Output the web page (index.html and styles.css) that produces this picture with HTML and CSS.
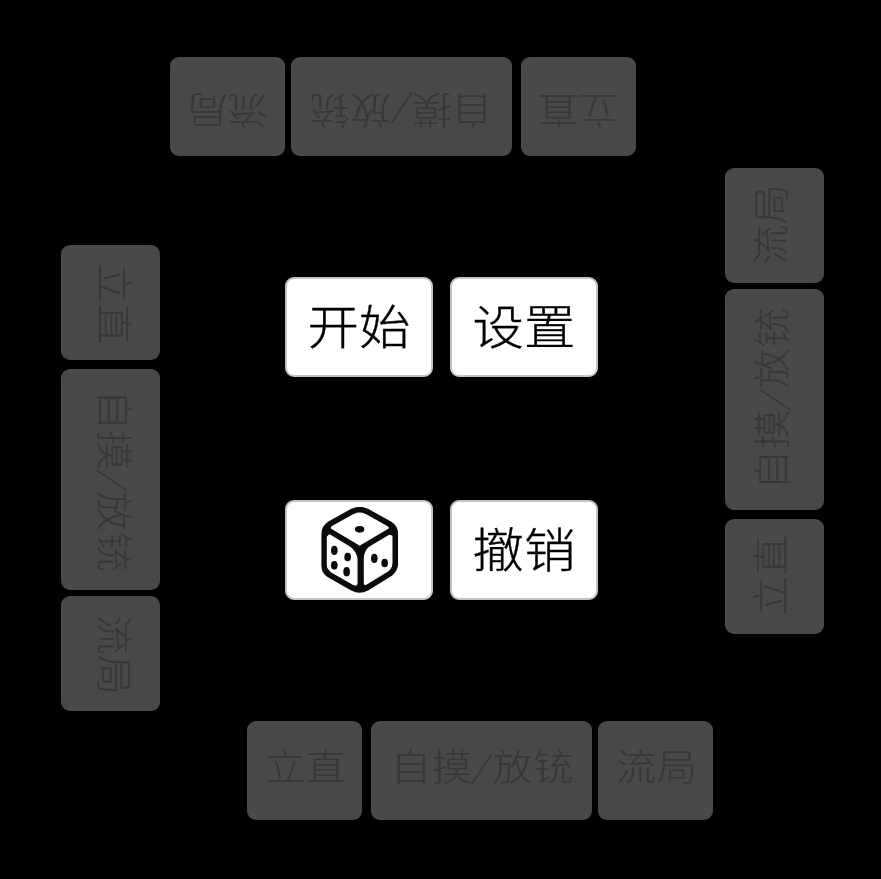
FILE: index.html
```html
<!DOCTYPE html>
<html lang="zh-CN">
<head>
<meta charset="utf-8">
<title>麻将计分</title>
<link rel="stylesheet" href="styles.css">
</head>
<body>
<main class="table">
  <section class="seat seat-top">
    <button class="action" disabled><span class="label">流局</span></button>
    <button class="action wide" disabled><span class="label">自摸<i class="slash">/</i>放铳</span></button>
    <button class="action spaced" disabled><span class="label">立直</span></button>
  </section>
  <section class="seat seat-left">
    <button class="action" disabled><span class="label">立直</span></button>
    <button class="action wide spaced" disabled><span class="label">自摸<i class="slash">/</i>放铳</span></button>
    <button class="action" disabled><span class="label">流局</span></button>
  </section>
  <section class="center">
    <button class="control"><span class="label">开始</span></button>
    <button class="control"><span class="label">设置</span></button>
    <button class="control">
      <svg class="dice" viewBox="124 36 230 258" aria-hidden="true">
        <path class="edge" d="M218 49Q239 39 260 49L330 88Q346 97 346 120V205Q346 224 330 236L260 279Q239 290 218 279L148 239Q132 230 132 209V120Q132 98 148 88Z"/>
        <path class="edge" d="M142 104L239 162L337 104M242 160V284"/>
        <path class="joint" d="M205 149L239 155L274 149Q251 165 251 193V266Q253 272 264 269L243 288L217 271Q231 275 233 267V193Q231 169 205 149ZM133 125L139 92L157 88Q149 99 155 112L139 126ZM321 88L341 92L346 126L337 122Q330 120 322 113Q331 102 321 88ZM133 209L144 222L156 236L136 229ZM337 209L346 208L341 230L321 236Q337 221 337 209Z"/>
        <ellipse cx="239" cy="103" rx="14" ry="10"/>
        <ellipse cx="163" cy="166" rx="10" ry="14"/>
        <ellipse cx="203" cy="186" rx="10" ry="13"/>
        <ellipse cx="163" cy="211" rx="10" ry="13"/>
        <ellipse cx="200" cy="230" rx="10" ry="14"/>
        <ellipse cx="283" cy="190" rx="10" ry="14"/>
        <ellipse cx="314" cy="204" rx="10" ry="13"/>
      </svg>
    </button>
    <button class="control"><span class="label">撤销</span></button>
  </section>
  <section class="seat seat-right">
    <button class="action" disabled><span class="label">流局</span></button>
    <button class="action wide" disabled><span class="label">自摸<i class="slash">/</i>放铳</span></button>
    <button class="action spaced" disabled><span class="label">立直</span></button>
  </section>
  <section class="seat seat-bottom">
    <button class="action" disabled><span class="label">立直</span></button>
    <button class="action wide spaced" disabled><span class="label">自摸<i class="slash">/</i>放铳</span></button>
    <button class="action" disabled><span class="label">流局</span></button>
  </section>
</main>
</body>
</html>
```
FILE: styles.css
```css
* { box-sizing: border-box; }
html, body { margin: 0; height: 100%; background: #000; overflow: hidden; }
.table {
  width: 881px;
  height: 879px;
  display: grid;
  grid-template-columns: 160px 565px 156px;
  grid-template-rows: 156px 565px 158px;
  grid-template-areas: "top top top" "left center right" "bottom bottom bottom";
}
button {
  margin: 0;
  padding: 0;
  border: 0;
  flex: none;
  display: flex;
  align-items: center;
  justify-content: center;
  font-family: KaiTi, "Kaiti SC", STKaiti, "Noto Sans CJK SC", sans-serif;
  font-weight: 300;
}
.label { white-space: nowrap; line-height: 1; flex: none; }
.slash { display: inline-block; width: 0.5em; text-align: center; font-style: normal; transform: scaleY(0.85) skewX(-10deg); }

.seat { display: flex; }
.action {
  width: 114.7px;
  height: 99.3px;
  border-radius: 9px;
  background: #494949;
  color: #373737;
  font-size: 41.4px;
}
.seat-top, .seat-bottom { gap: 6.6px; }
.seat-left, .seat-right { flex-direction: column; gap: 6.6px; }
.wide { width: 220.6px; }
.seat-top .spaced, .seat-bottom .spaced { margin-left: 2.4px; }
.seat-left .spaced, .seat-right .spaced { margin-top: 2.4px; }
.seat-left .action, .seat-right .action { width: 99.3px; height: 114.7px; }
.seat-left .wide, .seat-right .wide { height: 220.6px; }

.seat-top { grid-area: top; padding: 56.6px 0 0 170px; }
.seat-bottom { grid-area: bottom; padding: 0 0 0 247.3px; }
.seat-left { grid-area: left; padding: 89.4px 0 0 60.8px; }
.seat-right { grid-area: right; padding: 12px 0 0 0.2px; }
.seat-bottom .label { transform: translate(1px, -5px) scale(0.98, 0.9); }
.seat-top .label { transform: rotate(180deg) translate(0, -5px) scale(0.98, 0.9); }
.seat-left .label { transform: rotate(90deg) translate(1px, -5px) scale(0.98, 0.9); }
.seat-right .label { transform: rotate(-90deg) translate(1px, -4.5px) scale(0.98, 0.9); }

.center {
  grid-area: center;
  display: grid;
  grid-template-columns: 148px 148px;
  grid-auto-rows: 99.5px;
  gap: 123.5px 17.4px;
  padding: 121.3px 0 0 124.8px;
  align-content: start;
}
.control {
  border: 2px solid #c4c4c4;
  border-radius: 9px;
  background: #fff;
  color: #000;
  font-size: 53px;
}
.control .label { transform: translateY(-3px) scale(0.97, 0.88); -webkit-text-stroke: 0.4px #000; }
.dice { width: 76.7px; height: 86px; flex: none; fill: #0b0b0b; transform: translateX(1.3px); }
.edge { fill: none; stroke: #0b0b0b; stroke-width: 17; stroke-linejoin: round; }
```
